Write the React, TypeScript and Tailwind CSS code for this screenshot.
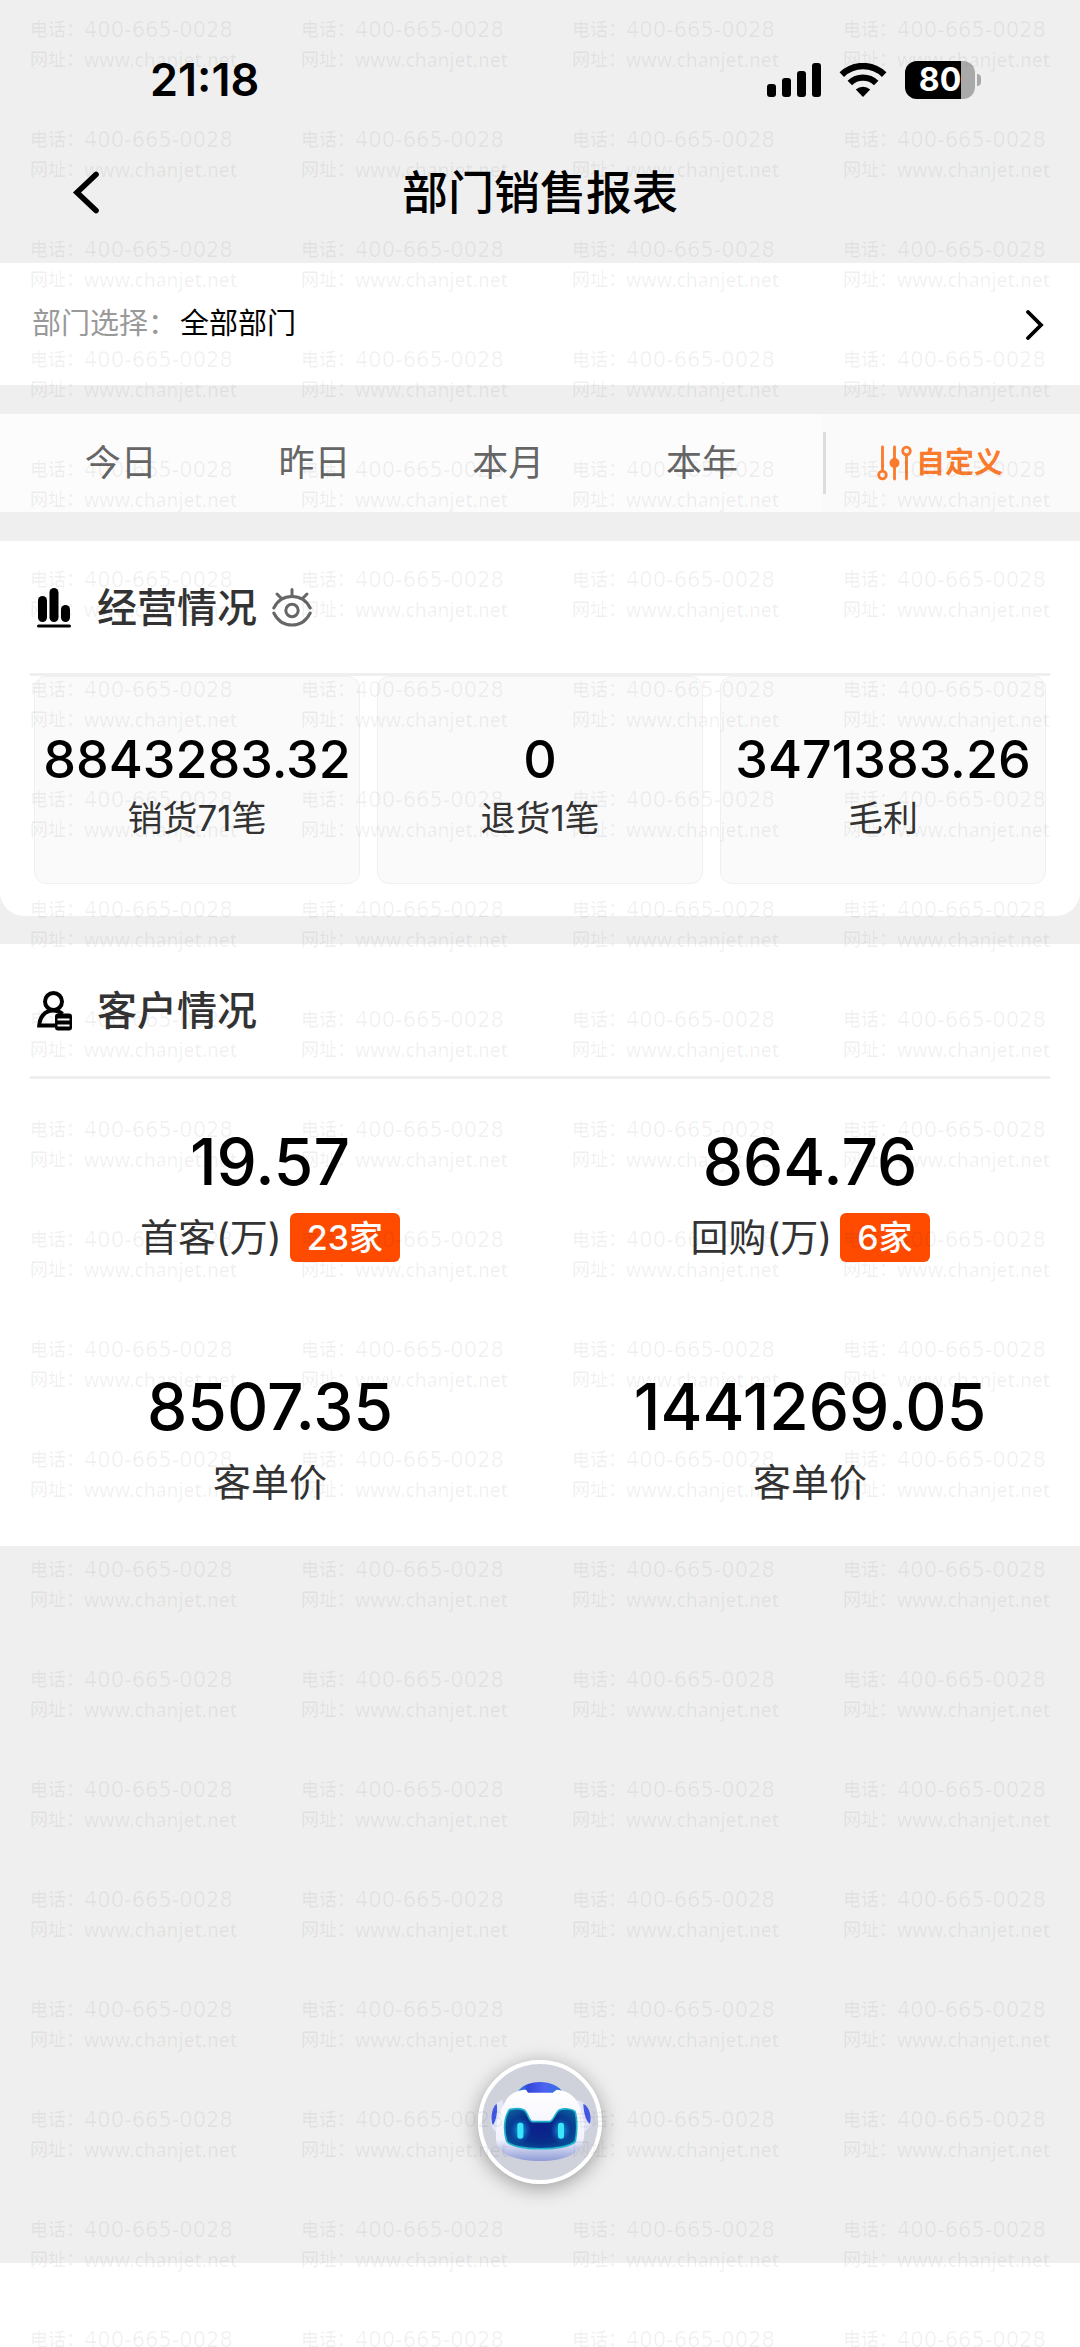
import React, { useState } from 'react';

const WATERMARK_CELLS = Array.from({ length: 22 * 4 }, (_, i) => i);

const TABS = ["今日", "昨日", "本月", "本年"];

const BUSINESS = [
  { id: 1, value: "8843283.32", label: "销货71笔" },
  { id: 2, value: "0", label: "退货1笔" },
  { id: 3, value: "3471383.26", label: "毛利" },
];

const CUSTOMERS = [
  { id: 1, value: "19.57", label: "首客(万)", badge: "23家" },
  { id: 2, value: "864.76", label: "回购(万)", badge: "6家" },
  { id: 3, value: "8507.35", label: "客单价" },
  { id: 4, value: "1441269.05", label: "客单价" },
];

function StatusBar() {
  return (
    <div className="flex items-center justify-between h-[136px] pt-[24px] pl-[150px] pr-[99px]">
      <span className="text-[45px] leading-[52px] font-semibold">21:18</span>
      <div className="flex items-center">
        <svg width="54" height="34" viewBox="0 0 54 34" aria-hidden="true">
          <rect x="0" y="21" width="9" height="13" rx="3" />
          <rect x="15" y="15" width="9" height="19" rx="3" />
          <rect x="30" y="8" width="9" height="26" rx="3" />
          <rect x="45" y="0" width="9" height="34" rx="3" />
        </svg>
        <svg className="ml-[18px]" width="48" height="34" viewBox="0 0 48 34" aria-hidden="true">
          <g fill="none" stroke="#000" strokeWidth="6.4">
            <path d="M2.8 11.6a30.5 30.5 0 0 1 42.4 0" />
            <path d="M10.8 20a19 19 0 0 1 26.4 0" />
          </g>
          <path d="M24 34l-7.2-7.4a10.4 10.4 0 0 1 14.4 0z" />
        </svg>
        <div className="relative ml-[18px] flex items-center justify-center w-[70px] h-[38px] rounded-[12px] overflow-hidden bg-[#a9a9a9]">
          <div className="absolute inset-y-0 left-0 w-[56px] bg-black" />
          <span className="relative text-[32px] leading-[38px] font-bold text-white">80</span>
        </div>
        <div className="ml-[2px] w-[4px] h-[12px] rounded-r-full bg-[#a9a9a9]" />
      </div>
    </div>
  );
}

function ChartIcon() {
  return (
    <svg width="34" height="40" viewBox="0 0 34 40" aria-hidden="true">
      <rect x="1" y="8" width="9" height="26" rx="4.500" />
      <rect x="12.500" y="0" width="9" height="34" rx="4.500" />
      <rect x="24" y="17" width="9" height="17" rx="4.500" />
      <rect x="0" y="36.500" width="34" height="3" rx="1.500" />
    </svg>
  );
}

function CustomerIcon() {
  return (
    <svg width="36" height="40" viewBox="0 0 36 40" fill="none" stroke="#000" strokeWidth="4" aria-hidden="true">
      <circle cx="16.500" cy="10.500" r="8.500" />
      <path d="M20 34.500H2.200C2.600 26 8 19.500 16 19.500c4 0 7 1.200 9.500 3.500" />
      <rect x="18" y="22.500" width="17" height="17" rx="3" fill="#000" stroke="none" />
      <path d="M20.500 28.500h12M20.500 34.500h12" stroke="#fff" strokeWidth="2" />
    </svg>
  );
}

function EyeIcon() {
  return (
    <svg width="40" height="40" viewBox="0 0 40 40" fill="none" stroke="#666" strokeWidth="3" strokeLinecap="round" aria-hidden="true">
      <path d="M1.800 20C5.500 12.500 12 8.500 20 8.500S34.500 12.500 38.200 20" />
      <path d="M1.800 25C5.500 32.500 12 37 20 37s14.500-4.500 18.200-12" />
      <circle cx="20" cy="22.500" r="6.200" />
      <path d="M20 8V1.500M9.500 10.500L5 6M30.500 10.500L35 6" />
    </svg>
  );
}

function SlidersIcon() {
  return (
    <svg width="35" height="36" viewBox="0 0 35 36" fill="none" stroke="#fa7b2c" strokeWidth="2.800" strokeLinecap="round" aria-hidden="true">
      <path d="M5.500 2v24M17.500 2v32M29.500 10v24" />
      <circle cx="5.500" cy="30" r="3.800" />
      <circle cx="17.500" cy="18" r="3.600" fill="#fa7b2c" />
      <circle cx="29.500" cy="6" r="3.800" />
    </svg>
  );
}

function RobotIcon() {
  return (
    <svg className="w-full h-full" viewBox="54 59 372 372" aria-hidden="true">
      <defs>
        <linearGradient id="head" x1="0" y1="0" x2="0" y2="1">
          <stop offset="0" stopColor="#ffffff" />
          <stop offset="0.700" stopColor="#f1f2fd" />
          <stop offset="1" stopColor="#8f9cd6" />
        </linearGradient>
        <linearGradient id="cap" x1="0" y1="0" x2="1" y2="0">
          <stop offset="0" stopColor="#2f9be8" />
          <stop offset="0.250" stopColor="#3346d8" />
          <stop offset="0.600" stopColor="#4d63f2" />
          <stop offset="1" stopColor="#2f72dc" />
        </linearGradient>
        <radialGradient id="visor" cx="0.5" cy="0.5" r="0.6">
          <stop offset="0" stopColor="#0d1f8c" />
          <stop offset="0.600" stopColor="#07308a" />
          <stop offset="1" stopColor="#0a5a9c" />
        </radialGradient>
        <radialGradient id="glow">
          <stop offset="0" stopColor="#19d3f5" stopOpacity="0.900" />
          <stop offset="1" stopColor="#0a6fd0" stopOpacity="0" />
        </radialGradient>
      </defs>
      <circle cx="240" cy="245" r="180" fill="#cfd2db" stroke="#fff" strokeWidth="12" />
      <path d="M128 178C104 186 92 212 92 240C92 258 100 272 112 276L132 230z" fill="#e3e6fa" />
      <path d="M110 190C96 200 90 232 98 254C108 244 114 212 110 190z" fill="#4459e2" />
      <path d="M350 178C380 186 394 212 393 240C392 258 382 270 368 276L352 230z" fill="#e3e6fa" />
      <path d="M370 190C388 198 396 228 390 250C378 244 370 214 370 190z" fill="#4459e2" />
      <path d="M168 162C190 114 288 112 312 162z" fill="url(#cap)" />
      <path d="M108 298C106 262 116 212 136 184C146 160 176 148 198 148L204 157H278L290 148C320 150 342 166 352 184C366 204 376 252 372 292C364 342 310 362 242 362S112 346 108 298z" fill="url(#head)" />
      <path d="M148 208C165 204 180 204 192 209C204 216 206 244 218 244H268C280 244 286 216 298 209C312 203 336 205 345 214C353 240 351 280 346 302C326 333 158 333 140 302C130 270 132 232 148 208z" fill="url(#visor)" stroke="#1fb5cf" strokeWidth="5" />
      <ellipse cx="181" cy="270" rx="32" ry="40" fill="url(#glow)" />
      <ellipse cx="303" cy="270" rx="32" ry="40" fill="url(#glow)" />
      <rect x="172" y="247" width="18" height="48" rx="8" fill="#3be6fb" />
      <rect x="294" y="247" width="18" height="48" rx="8" fill="#3be6fb" />
    </svg>
  );
}

function Watermark() {
  return (
    <div className="absolute inset-0 overflow-hidden pointer-events-none select-none text-black/6" aria-hidden="true">
      <div className="grid grid-cols-[repeat(4,271px)] pt-[15px] pl-[30px]">
        {WATERMARK_CELLS.map((n) => (
          <div key={n} className="h-[110px] text-[18px] leading-[30px] font-medium whitespace-nowrap">
            <p className="flex">电话：<span className="font-['DejaVu_Sans',sans-serif] text-[21px] font-normal">400-665-0028</span></p>
            <p className="flex">网址：<span className="font-['Noto_Sans',sans-serif] text-[19px]">www.chanjet.net</span></p>
          </div>
        ))}
      </div>
    </div>
  );
}

export default function App() {
  const [activeTab, setActiveTab] = useState("自定义");
  const [visible, setVisible] = useState(true);

  return (
    <div className="relative min-h-screen flex flex-col overflow-hidden bg-white text-black font-['Inter','Noto_Sans_CJK_SC',sans-serif]">
      <div className="grow bg-[#efefef]">
        <header className="h-[263px]">
          <StatusBar />
          <div className="grid grid-cols-[1fr_auto_1fr] items-center h-[112px]">
            <button type="button" aria-label="返回" className="justify-self-start ml-[71px] cursor-pointer">
              <svg width="30" height="44" viewBox="0 0 30 44" fill="none" stroke="#000" strokeWidth="5.600" strokeLinecap="round" aria-hidden="true">
                <path d="M25 4.500L6 22.500L25 40.500" />
              </svg>
            </button>
            <h1 className="text-[46px] leading-[56px] font-medium">部门销售报表</h1>
          </div>
        </header>

        <button type="button" className="flex items-center gap-[3px] w-full h-[122px] pl-[32px] pr-[35px] bg-white text-[29px] leading-[40px] cursor-pointer">
          <span className="text-[#999]">部门选择：</span>
          <span>全部部门</span>
          <svg className="ml-auto" width="20" height="32" viewBox="0 0 20 32" fill="none" stroke="#000" strokeWidth="3.800" strokeLinecap="round" aria-hidden="true">
            <path d="M3 4L16 17L3 30" />
          </svg>
        </button>

        <nav className="flex h-[98px] mt-[29px] bg-[#fcfcfc]">
          <div className="grid grid-cols-4 grow pl-[24px] pr-[24px]">
            {TABS.map((tab) => (
              <button key={tab} type="button" onClick={() => setActiveTab(tab)} className="text-[36px] leading-[50px] text-[#666] cursor-pointer">
                {tab}
              </button>
            ))}
          </div>
          <div className="flex items-center w-[257px] pr-[26px] bg-[#fafafa]">
            <div className="w-[3px] h-[62px] bg-[#ddd]" />
            <button type="button" aria-pressed={activeTab === "自定义"} onClick={() => setActiveTab("自定义")} className="flex items-center justify-center gap-[4px] grow text-[29px] leading-[40px] font-bold text-[#fa7b2c] cursor-pointer">
              <SlidersIcon />
              自定义
            </button>
          </div>
        </nav>

        <section className="mt-[29px] px-[30px] pb-[32px] bg-white rounded-b-[24px]">
          <div className="flex items-center h-[135px] pt-[2px] pl-[7px] border-b-3 border-[#efefef]">
            <ChartIcon />
            <h2 className="ml-[26px] text-[40px] leading-[56px] font-medium text-[#333]">经营情况</h2>
            <button type="button" aria-label="显示金额" aria-pressed={visible} onClick={() => setVisible(!visible)} className="ml-[15px] cursor-pointer">
              <EyeIcon />
            </button>
          </div>
          <div className="grid grid-cols-3 gap-[17px] px-[4px]">
            {BUSINESS.map((item) => (
              <div key={item.id} className="flex flex-col items-center h-[208px] pt-[52px] bg-[#fafafa] border border-[#f0f0f0] rounded-[12px]">
                <span className="text-[52px] leading-[62px] font-medium">{visible ? item.value : "****"}</span>
                <span className="text-[35px] leading-[54px] text-[#333]">{item.label}</span>
              </div>
            ))}
          </div>
        </section>

        <section className="mt-[28px] bg-white">
          <div className="flex items-center h-[135px] mx-[30px] pt-[2px] pl-[7px] border-b-3 border-[#efefef]">
            <CustomerIcon />
            <h2 className="ml-[24px] text-[40px] leading-[56px] font-medium text-[#333]">客户情况</h2>
          </div>
          <div className="grid grid-cols-2 gap-y-[95px] pt-[44px] pb-[28px]">
            {CUSTOMERS.map((item) => (
              <div key={item.id} className="flex flex-col items-center">
                <span className="text-[64px] leading-[78px] font-medium">{item.value}</span>
                <div className="flex items-center gap-[8px] h-[72px]">
                  <span className="text-[38px] leading-[54px] text-[#333]">{item.label}</span>
                  {item.badge && (
                    <span className="px-[17px] bg-[#ff4b00] rounded-[6px] text-[34px] leading-[49px] font-medium text-white">{item.badge}</span>
                  )}
                </div>
              </div>
            ))}
          </div>
        </section>
      </div>
      <div className="h-[84px] bg-white" />

      {/* Assistente flutuante */}
      <button type="button" aria-label="智能助手" className="absolute left-1/2 bottom-[163px] -translate-x-1/2 w-[124px] h-[124px] rounded-full shadow-[0_4px_20px_rgba(0,0,0,0.35)] cursor-pointer">
        <RobotIcon />
      </button>

      <Watermark />
    </div>
  );
}
